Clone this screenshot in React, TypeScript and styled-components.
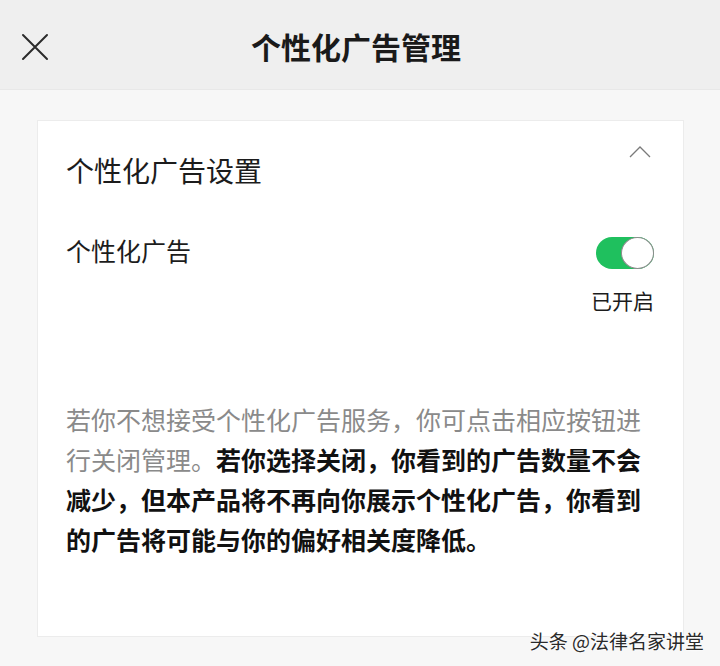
import React, {useState} from 'react';
import styled, {createGlobalStyle} from 'styled-components';

const GlobalStyle = createGlobalStyle`
	html, body {
		margin: 0;
		padding: 0;
		background-color: #f7f7f7;
		font-family: "Noto Sans CJK SC", "Noto Sans", sans-serif;
	}
`

type ToggleProps = {
	on: boolean
}

const Page = styled.div`
	position: relative;
	width: 720px;
	height: 666px;
	overflow: hidden;
	background-color: #f7f7f7;
`

const Header = styled.header`
	display: grid;
	grid-template-columns: 70px 1fr 70px;
	align-items: center;
	height: 89px;
	background-color: #efefef;
	border-bottom: 1px solid #e8e8e8;
`

const CloseButton = styled.button`
	display: flex;
	align-items: center;
	justify-content: center;
	width: 70px;
	height: 89px;
	padding: 4px 0 0 0;
	border: none;
	background: none;
	cursor: pointer;
`

const HeaderTitle = styled.h1`
	margin: 3px 8px 0 0;
	text-align: center;
	font-size: 30px;
	line-height: 32px;
	font-weight: 700;
	color: #1a1a1a;
`

const Content = styled.main`
	padding: 30px 36px 0 37px;
`

const Card = styled.section`
	box-sizing: border-box;
	display: flex;
	flex-direction: column;
	height: 517px;
	padding: 35px 29px 0 28px;
	background-color: #ffffff;
	border: 1px solid #ececec;
`

const TitleRow = styled.div`
	display: flex;
	justify-content: space-between;
	align-items: flex-start;
`

const CardTitle = styled.h2`
	margin: 0;
	font-size: 28px;
	line-height: 28px;
	font-weight: 400;
	color: #1c1c1c;
`

const Chevron = styled.svg`
	margin-top: -10px;
	margin-right: 3px;
	cursor: pointer;
`

const SettingRow = styled.div`
	display: flex;
	justify-content: space-between;
	align-items: flex-start;
	margin-top: 50px;
`

const SettingLabel = styled.span`
	font-size: 25px;
	line-height: 32px;
	color: #1c1c1c;
`

const SwitchColumn = styled.div`
	display: flex;
	flex-direction: column;
	align-items: flex-end;
	padding-top: 3px;
`

const Switch = styled.button<ToggleProps>`
	position: relative;
	width: 58px;
	height: 32px;
	padding: 0;
	border: none;
	border-radius: 16px;
	background-color: ${props => props.on ? '#1fc05e' : '#dcdcdc'};
	cursor: pointer;

	&::after {
		content: '';
		position: absolute;
		top: 0;
		left: ${props => props.on ? '25px' : '0'};
		box-sizing: border-box;
		width: 33px;
		height: 32px;
		border-radius: 50%;
		background-color: #ffffff;
		border: 1px solid #8c8c8c;
	}
`

const SwitchStatus = styled.span`
	margin-top: 21px;
	font-size: 21px;
	line-height: 21px;
	color: #1c1c1c;
`

const Notice = styled.p`
	width: 580px;
	margin: 88px 0 0 0;
	font-size: 25px;
	line-height: 40px;
	color: #8a8a8a;
`

const Strong = styled.strong`
	font-weight: 700;
	color: #111111;
`

const Watermark = styled.span`
	position: absolute;
	right: 16px;
	bottom: 13px;
	font-size: 19px;
	line-height: 24px;
	color: #2a2a2a;
	text-shadow: 0 0 2px #ffffff, 0 0 3px #ffffff;
`

const App = () => {
	const [enabled, setEnabled] = useState(true)

	return (
		<Page>
			<GlobalStyle />
			<Header>
				<CloseButton aria-label='关闭'>
					<svg width='28' height='28' viewBox='0 0 28 28' fill='none'>
						<path d='M2 2 L26 26 M26 2 L2 26' stroke='#2b2b2b' strokeWidth='2' strokeLinecap='round' />
					</svg>
				</CloseButton>
				<HeaderTitle>个性化广告管理</HeaderTitle>
				<div />
			</Header>

			<Content>
				<Card>
					<TitleRow>
						<CardTitle>个性化广告设置</CardTitle>
						<Chevron width='22' height='12' viewBox='0 0 22 12' fill='none'>
							<path d='M1 11 L11 1 L21 11' stroke='#7a7a7a' strokeWidth='1.3' />
						</Chevron>
					</TitleRow>

					<SettingRow>
						<SettingLabel>个性化广告</SettingLabel>
						<SwitchColumn>
							<Switch on={enabled} onClick={() => setEnabled(prev => !prev)} />
							<SwitchStatus>{enabled ? '已开启' : '已关闭'}</SwitchStatus>
						</SwitchColumn>
					</SettingRow>

					<Notice>
						若你不想接受个性化广告服务，你可点击相应按钮进行关闭管理。
						<Strong>若你选择关闭，你看到的广告数量不会减少，但本产品将不再向你展示个性化广告，你看到的广告将可能与你的偏好相关度降低。</Strong>
					</Notice>
				</Card>
			</Content>

			<Watermark>头条 @法律名家讲堂</Watermark>
		</Page>
	);
};

export default App;
